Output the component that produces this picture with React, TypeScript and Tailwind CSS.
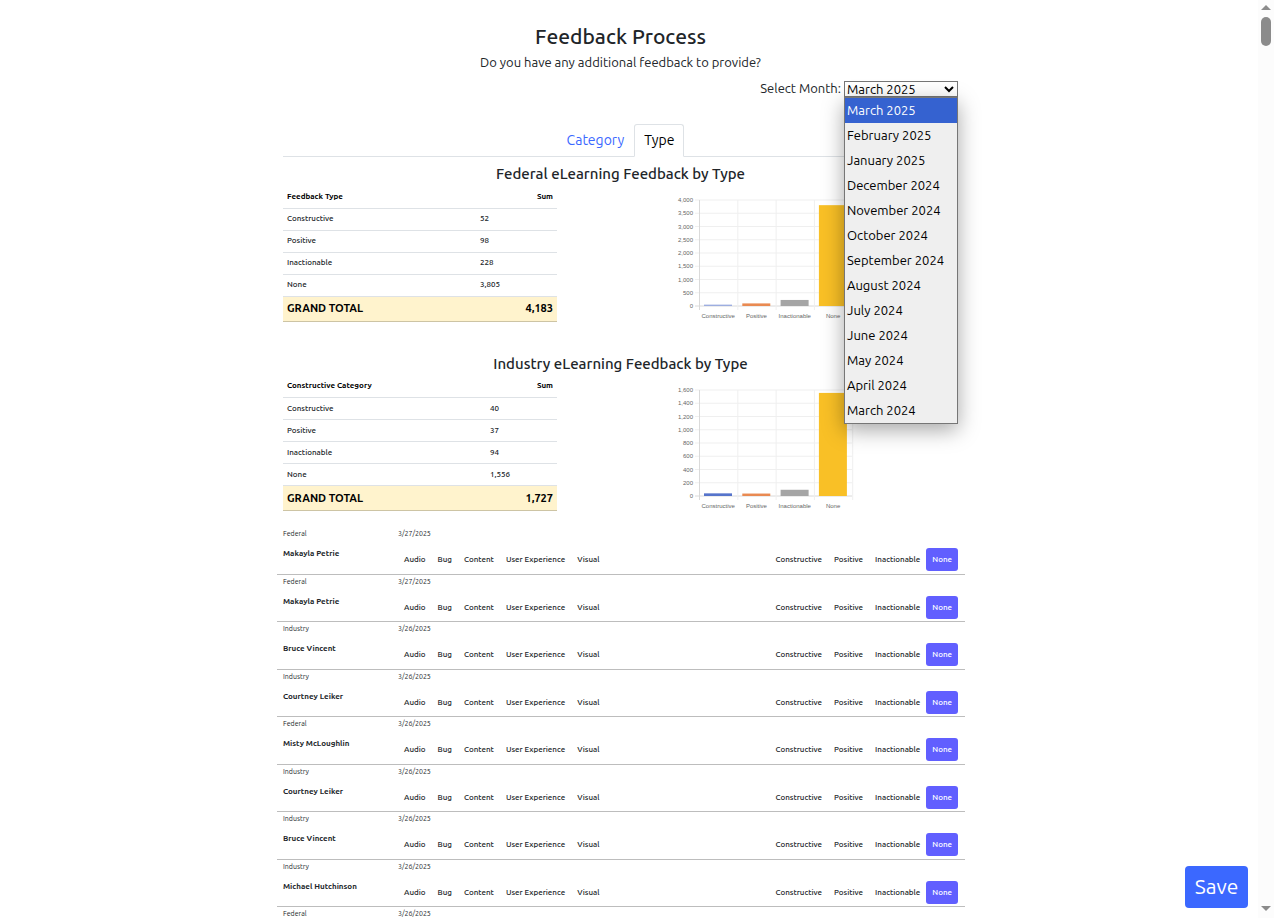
import { useState } from "react";

const MONTHS = [
  "March 2025",
  "February 2025",
  "January 2025",
  "December 2024",
  "November 2024",
  "October 2024",
  "September 2024",
  "August 2024",
  "July 2024",
  "June 2024",
  "May 2024",
  "April 2024",
  "March 2024",
];

const TABS = ["Category", "Type"];
const CATEGORIES = ["Audio", "Bug", "Content", "User Experience", "Visual"];
const TYPES = ["Constructive", "Positive", "Inactionable", "None"];

interface Report {
  title: string;
  heading: string;
  labelWidth: string;
  values: number[];
  colors: string[];
  max: number;
  step: number;
}

const REPORTS: Report[] = [
  {
    title: "Federal eLearning Feedback by Type",
    heading: "Feedback Type",
    labelWidth: "w-[193px]",
    values: [52, 98, 228, 3805],
    colors: ["#9daee0", "#e98a52", "#a5a5a5", "#f9c026"],
    max: 4000,
    step: 500,
  },
  {
    title: "Industry eLearning Feedback by Type",
    heading: "Constructive Category",
    labelWidth: "w-[203px]",
    values: [40, 37, 94, 1556],
    colors: ["#5674cb", "#e98a52", "#a5a5a5", "#f9c026"],
    max: 1600,
    step: 200,
  },
];

interface FeedbackEntry {
  id: number;
  source: string;
  date: string;
  name: string;
}

const ENTRIES: FeedbackEntry[] = [
  { id: 1, source: "Federal", date: "3/27/2025", name: "Makayla Petrie" },
  { id: 2, source: "Federal", date: "3/27/2025", name: "Makayla Petrie" },
  { id: 3, source: "Industry", date: "3/26/2025", name: "Bruce Vincent" },
  { id: 4, source: "Industry", date: "3/26/2025", name: "Courtney Leiker" },
  { id: 5, source: "Federal", date: "3/26/2025", name: "Misty McLoughlin" },
  { id: 6, source: "Industry", date: "3/26/2025", name: "Courtney Leiker" },
  { id: 7, source: "Industry", date: "3/26/2025", name: "Bruce Vincent" },
  { id: 8, source: "Industry", date: "3/26/2025", name: "Michael Hutchinson" },
  { id: 9, source: "Federal", date: "3/26/2025", name: "Misty McLoughlin" },
];

function MonthPicker() {
  const [month, setMonth] = useState(MONTHS[0]);
  const [open, setOpen] = useState(true);

  return (
    <div className="mt-[9px] flex h-4 items-center justify-end gap-[3px] text-[13px]">
      <label htmlFor="month">Select Month:</label>
      <div className="relative w-[114px]">
        <select
          id="month"
          value={month}
          onChange={(e) => setMonth(e.target.value)}
          className="block h-4 w-full appearance-none border border-[#767676] bg-white pl-[2px] leading-[14px] text-black"
        >
          {MONTHS.map((m) => (
            <option key={m}>{m}</option>
          ))}
        </select>
        <svg
          className="pointer-events-none absolute top-1 right-1 h-2 w-[10px]"
          viewBox="0 0 10 8"
          fill="none"
          stroke="black"
          strokeWidth={2}
        >
          <path d="M1 2 L5 6 L9 2" />
        </svg>
        {open && (
          <ul className="absolute top-4 left-0 z-10 w-full border border-[#767676] bg-[#efefef] text-black shadow-[0_6px_20px_rgba(0,0,0,0.35)]">
            {MONTHS.map((m) => (
              <li key={m}>
                <button
                  type="button"
                  onClick={() => {
                    setMonth(m);
                    setOpen(false);
                  }}
                  className={`block h-[25px] w-full pt-px pl-[2px] text-left whitespace-nowrap ${
                    m === month ? "bg-[#3562d0] text-white" : ""
                  }`}
                >
                  {m}
                </button>
              </li>
            ))}
          </ul>
        )}
      </div>
    </div>
  );
}

function BarChart({ report }: { report: Report }) {
  const { values, colors, max, step } = report;
  const top = 14;
  const bottom = 120;
  const left = 29;
  const slot = 38.3;
  const y = (v: number) => bottom - (v / max) * (bottom - top);

  const ticks: number[] = [];
  for (let t = 0; t <= max; t += step) ticks.push(t);

  return (
    <svg
      viewBox="0 0 288 135"
      className="h-[135px] w-[288px] font-['Liberation_Sans'] text-[6px]"
      role="img"
      aria-label={report.title}
    >
      {ticks.map((t) => (
        <g key={t}>
          <line
            x1={left - 4}
            x2={left + slot * 4}
            y1={y(t)}
            y2={y(t)}
            stroke={t === 0 ? "#dadada" : "#efefef"}
          />
          <text x={left - 6} y={y(t) + 2} textAnchor="end" fill="#666">
            {t.toLocaleString("en-US")}
          </text>
        </g>
      ))}
      {[0, 1, 2, 3, 4].map((i) => (
        <line
          key={i}
          x1={left + slot * i + 0.5}
          x2={left + slot * i + 0.5}
          y1={top}
          y2={bottom + 4}
          stroke={i === 0 ? "#dadada" : "#efefef"}
        />
      ))}
      {values.map((v, i) => (
        <g key={TYPES[i]}>
          <rect
            x={left + slot * i + 5}
            y={y(v)}
            width={28}
            height={bottom - y(v)}
            fill={colors[i]}
          />
          <text
            x={left + slot * (i + 0.5)}
            y={bottom + 12}
            textAnchor="middle"
            fill="#666"
          >
            {TYPES[i]}
          </text>
        </g>
      ))}
    </svg>
  );
}

function ReportSection({ report }: { report: Report }) {
  const total = report.values.reduce((sum, v) => sum + v, 0);

  return (
    <section>
      <h2 className="text-center text-[15px] leading-6 font-medium">
        {report.title}
      </h2>
      <div className="flex items-start justify-between">
        <table className="w-[274px] table-fixed border-collapse text-[8px]">
          <thead>
            <tr className="h-[22px] border-b border-[#dee2e6] text-black">
              <th className={`px-1 text-left font-bold ${report.labelWidth}`}>
                {report.heading}
              </th>
              <th className="px-1 text-right font-bold">Sum</th>
            </tr>
          </thead>
          <tbody>
            {report.values.map((v, i) => (
              <tr
                key={TYPES[i]}
                className="h-[22px] border-b border-[#dee2e6] font-medium"
              >
                <td className="px-1">{TYPES[i]}</td>
                <td className="px-1">{v.toLocaleString("en-US")}</td>
              </tr>
            ))}
          </tbody>
          <tfoot>
            <tr className="h-[25px] border-b border-[#cdc4a4] bg-[#fff3cd] text-[11px] font-bold text-black">
              <td className="px-1">GRAND TOTAL</td>
              <td className="px-1 text-right">
                {total.toLocaleString("en-US")}
              </td>
            </tr>
          </tfoot>
        </table>
        <BarChart report={report} />
      </div>
    </section>
  );
}

interface ChoiceGroupProps {
  options: string[];
  selected?: string;
  onSelect: (value: string) => void;
}

function ChoiceGroup({ options, selected, onSelect }: ChoiceGroupProps) {
  return (
    <div className="flex font-medium">
      {options.map((option) => (
        <button
          key={option}
          type="button"
          onClick={() => onSelect(option)}
          className={`h-[23px] rounded-[3px] px-[6px] whitespace-nowrap ${
            option === selected ? "bg-[#615fff] text-white" : ""
          }`}
        >
          {option}
        </button>
      ))}
    </div>
  );
}

function FeedbackRow({ entry }: { entry: FeedbackEntry }) {
  const [category, setCategory] = useState<string>();
  const [type, setType] = useState("None");

  return (
    <li className="grid grid-cols-[115px_1fr] border-b border-[#bdbdbd] pr-[7px] pl-[6px] text-[8px] leading-3 odd:h-12 even:h-[47px]">
      <div>
        <div className="text-[7px]">{entry.source}</div>
        <div className="mt-[9px] font-bold">{entry.name}</div>
      </div>
      <div>
        <div className="text-[7px]">{entry.date}</div>
        <div className="mt-[9px] flex justify-between">
          <ChoiceGroup
            options={CATEGORIES}
            selected={category}
            onSelect={setCategory}
          />
          <ChoiceGroup options={TYPES} selected={type} onSelect={setType} />
        </div>
      </div>
    </li>
  );
}

function ScrollRail() {
  return (
    <div className="flex w-4 flex-col items-center justify-between bg-[#fcfcfc] pt-[5px] pb-[7px]">
      <div className="flex flex-col items-center gap-[7px]">
        <svg className="h-[5px] w-[10px]" viewBox="0 0 10 5" fill="#8b8b8b">
          <path d="M0 5 L5 0 L10 5 Z" />
        </svg>
        <div className="h-[29px] w-[10px] rounded-full bg-[#8b8b8b]" />
      </div>
      <svg className="h-[5px] w-[10px]" viewBox="0 0 10 5" fill="#8b8b8b">
        <path d="M0 0 L5 5 L10 0 Z" />
      </svg>
    </div>
  );
}

export default function App() {
  const [tab, setTab] = useState("Type");

  return (
    <div className="flex h-screen bg-white font-['Ubuntu','Noto_Sans',sans-serif] text-[#212529]">
      <main className="flex-1 overflow-y-auto pr-4 [scrollbar-width:none]">
        <div className="mx-auto max-w-[688px] pt-6">
          <div className="pr-[7px] pl-[6px]">
            <h1 className="text-center text-[21px] leading-6 font-medium">
              Feedback Process
            </h1>
            <p className="mt-1 text-center text-[13px] leading-5">
              Do you have any additional feedback to provide?
            </p>
            <MonthPicker />

            <nav className="mt-[27px] flex justify-center border-b border-[#dee2e6] text-[14px]">
              {TABS.map((t) => (
                <button
                  key={t}
                  type="button"
                  onClick={() => setTab(t)}
                  className={`-mb-px h-[33px] rounded-t-[3px] border px-[9px] ${
                    t === tab
                      ? "border-[#dee2e6] border-b-white bg-white text-black"
                      : "border-transparent text-[#3b68ff]"
                  }`}
                >
                  {t}
                </button>
              ))}
            </nav>

            <div className="mt-[5px] flex flex-col gap-[30px]">
              {REPORTS.map((report) => (
                <ReportSection key={report.title} report={report} />
              ))}
            </div>
          </div>

          <ul className="mt-4">
            {ENTRIES.map((entry) => (
              <FeedbackRow key={entry.id} entry={entry} />
            ))}
          </ul>
        </div>
      </main>

      <ScrollRail />

      <button
        type="button"
        className="fixed right-[26px] bottom-[10px] h-[42px] w-[63px] rounded-[4px] bg-[#3b68ff] text-[21px] text-white"
      >
        Save
      </button>
    </div>
  );
}
